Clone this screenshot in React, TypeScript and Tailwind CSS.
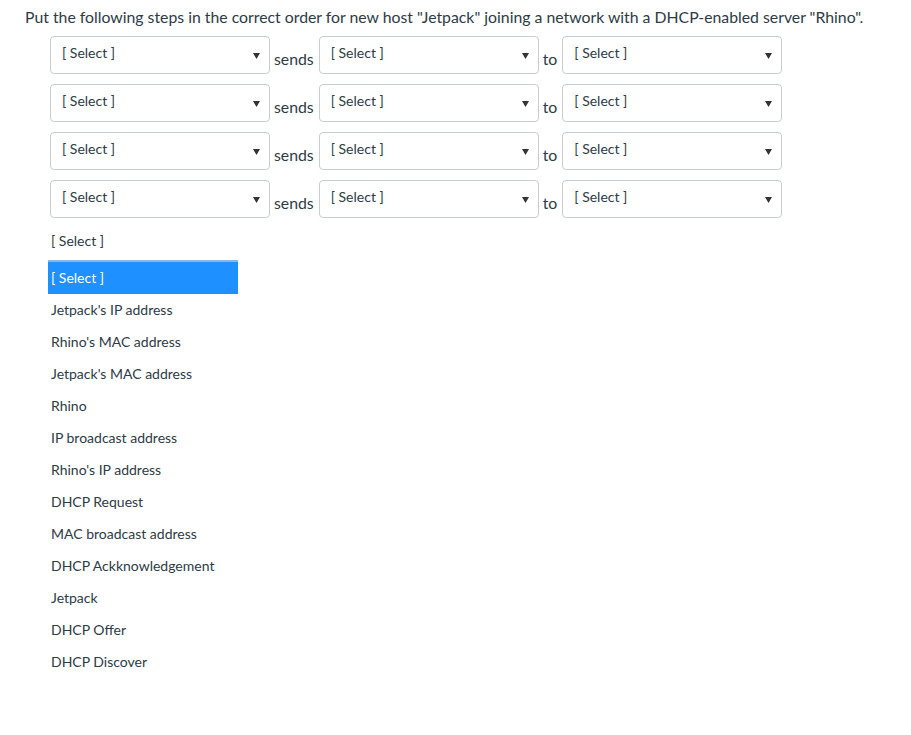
import React from "react";

const Arrow = () => (
  <svg width="7" height="6" viewBox="0 0 7 6" className="absolute right-[9px] top-[16px]">
    <path d="M0 0 L7 0 L3.5 6 Z" fill="#333" />
  </svg>
);

const SelectBox = () => (
  <div className="relative w-[220px] h-[38px] shrink-0 rounded-[4px] border border-[#c7cdd1] bg-white pl-[11px] pt-[7px] text-[14px] leading-[18px] text-[#2d3b45]">
    [ Select ]
    <Arrow />
  </div>
);

const options = [
  "Jetpack's IP address",
  "Rhino's MAC address",
  "Jetpack's MAC address",
  "Rhino",
  "IP broadcast address",
  "Rhino's IP address",
  "DHCP Request",
  "MAC broadcast address",
  "DHCP Ackknowledgement",
  "Jetpack",
  "DHCP Offer",
  "DHCP Discover",
];

export default function App() {
  return (
    <div className="min-h-[735px] w-[911px] bg-white text-[#2d3b45]" style={{ fontFamily: "Lato, 'Noto Sans', sans-serif" }}>
      <div className="pl-[25px] pt-[6px]">
        <div className="text-[15.8px] leading-[22px]">
          Put the following steps in the correct order for new host "Jetpack" joining a network with a DHCP-enabled server "Rhino".
        </div>
        <div className="mt-[8px] ml-[25px] flex flex-col gap-[10px]">
          {[0, 1, 2, 3].map((i) => (
            <div key={i} className="flex items-start">
              <SelectBox />
              <span className="pl-[4px] pr-[5px] pt-[13px] text-[15.8px] leading-[20px]">sends</span>
              <SelectBox />
              <span className="pl-[4px] pr-[5px] pt-[13px] text-[15.8px] leading-[20px]">to</span>
              <SelectBox />
            </div>
          ))}
        </div>
        <div className="ml-[26px] mt-[13px] text-[14px] leading-[20px]">[ Select ]</div>
        <div className="ml-[23px] mt-[9px] w-[190px] text-[14px]">
          <div className="h-[34px] border-t-2 border-[#8fb4ea] bg-[#1e90ff] pl-[3px] leading-[31px] text-white">
            [ Select ]
          </div>
          {options.map((o) => (
            <div key={o} className="h-[32px] pl-[3px] leading-[32px]">
              {o}
            </div>
          ))}
        </div>
      </div>
    </div>
  );
}
